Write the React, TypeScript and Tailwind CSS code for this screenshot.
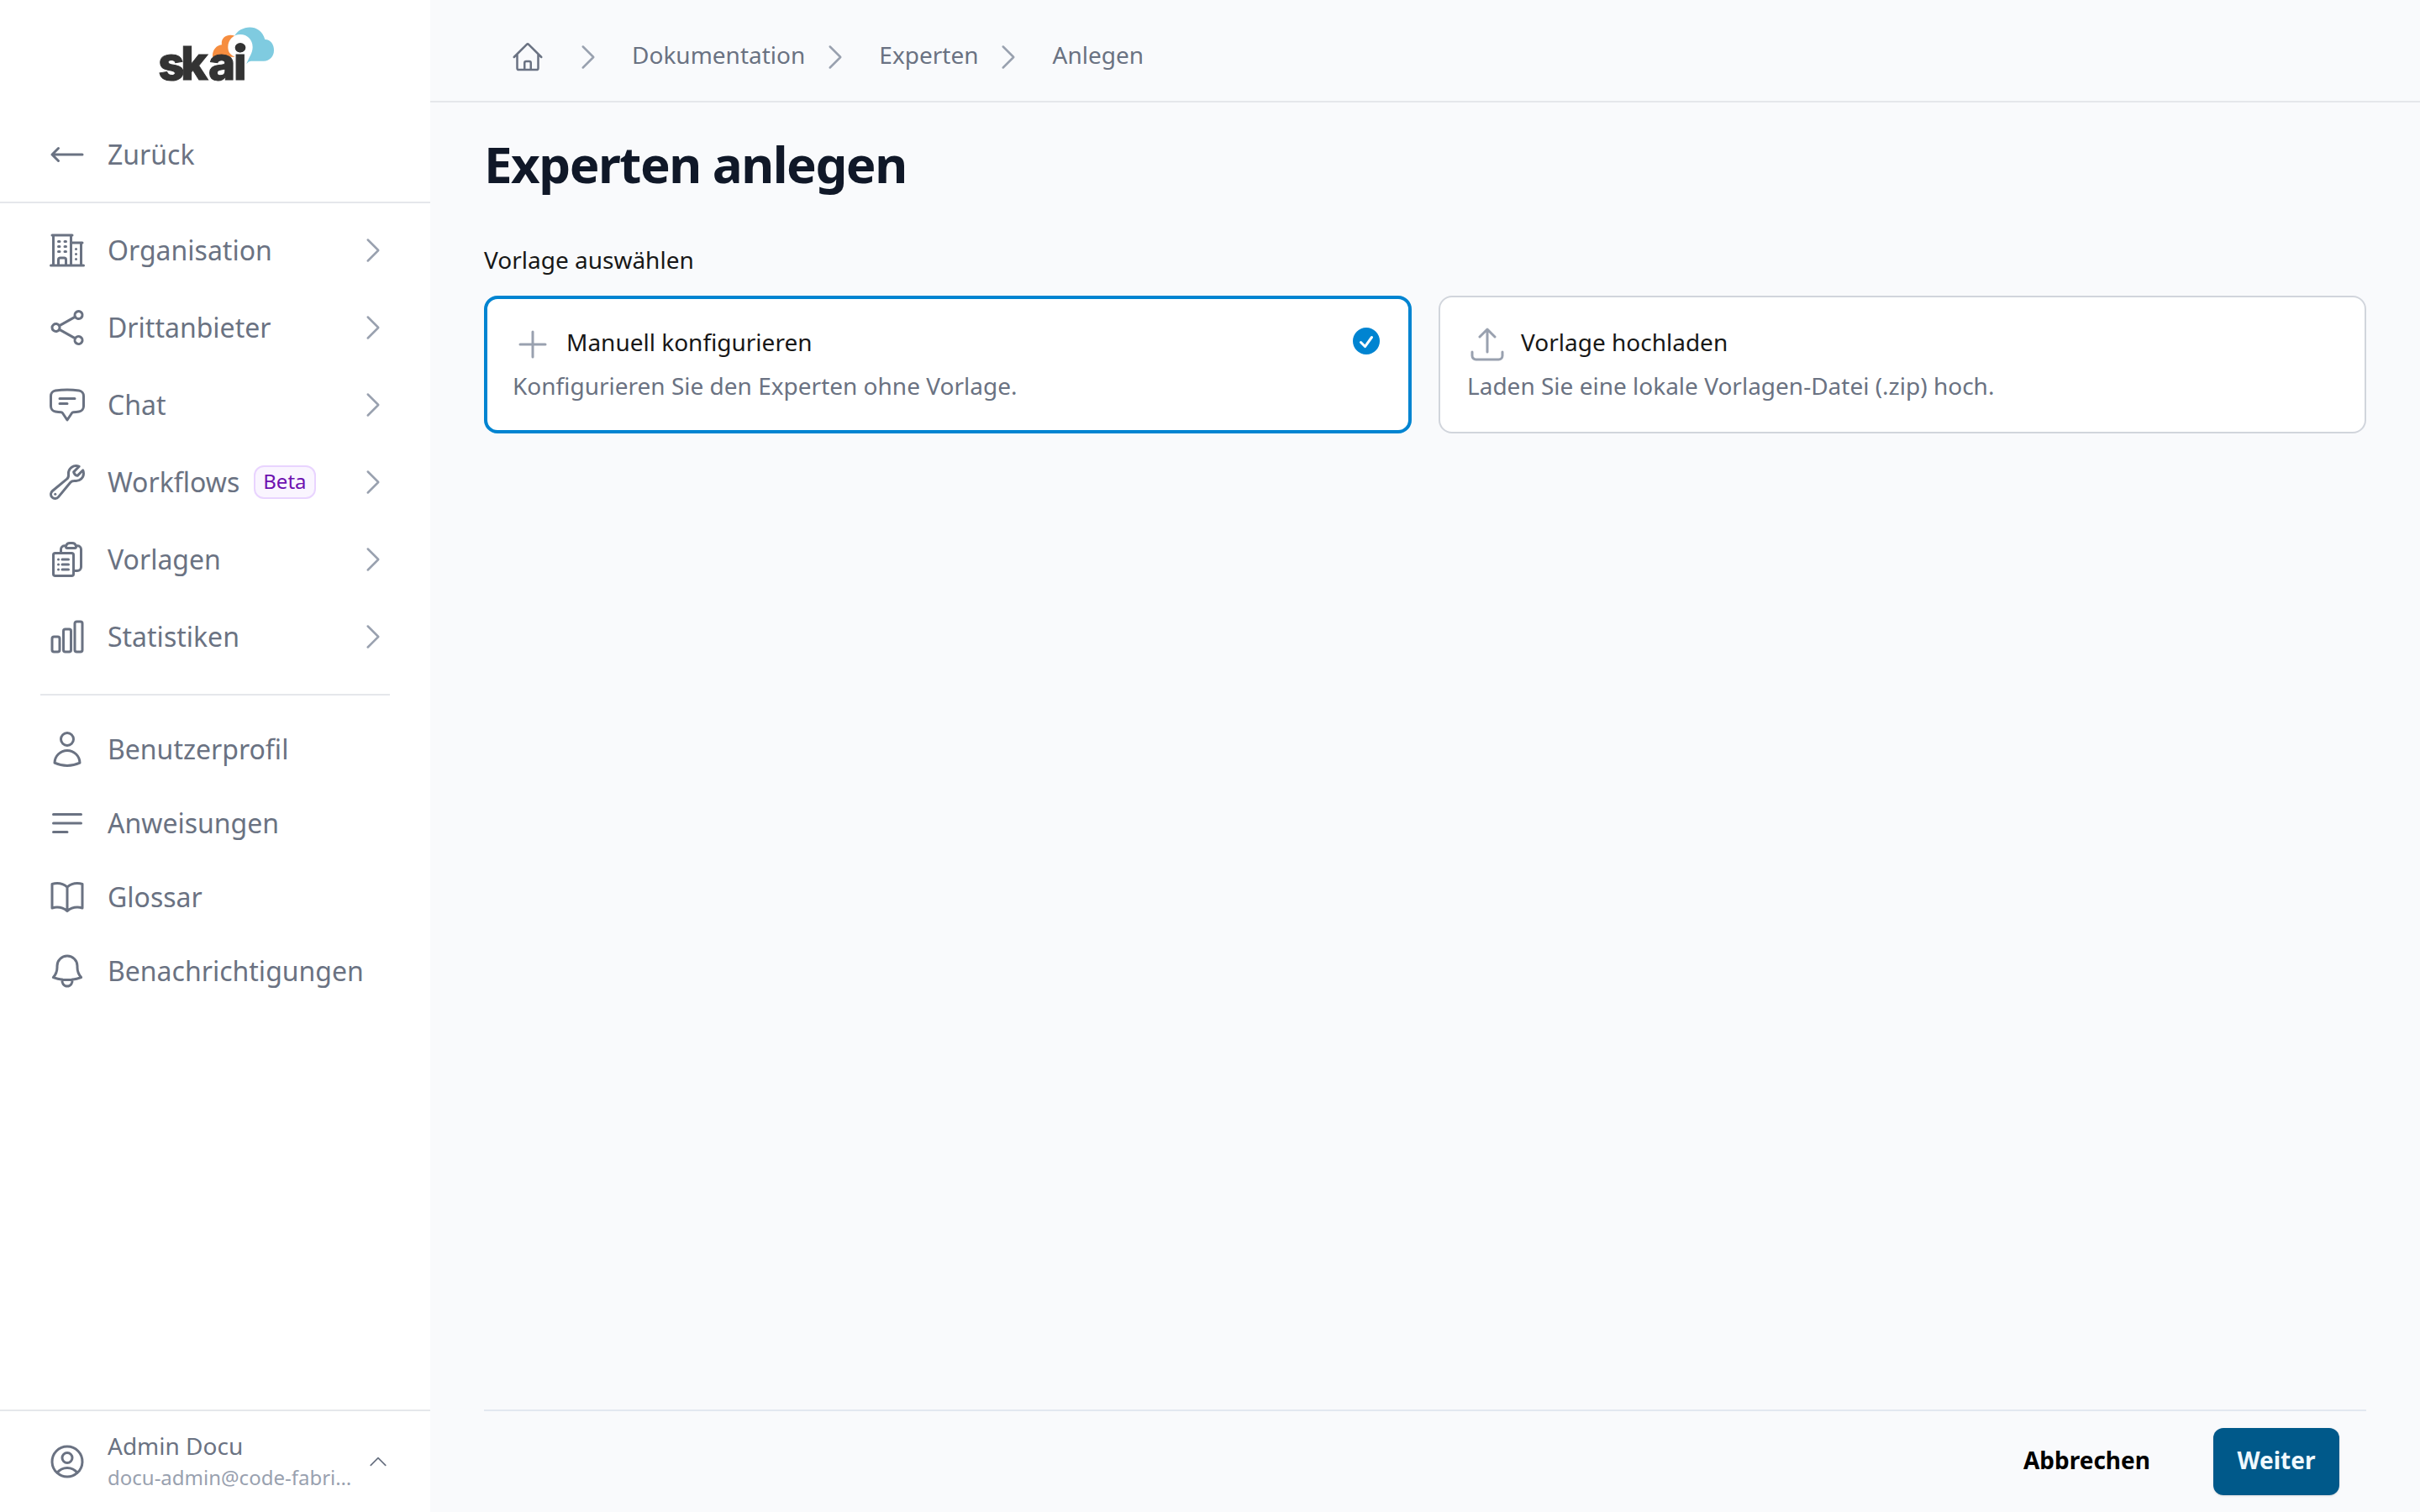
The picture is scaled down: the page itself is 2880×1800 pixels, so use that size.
import type { IconType } from 'react-icons';
import {
  HiMiniCheckCircle,
  HiOutlineArrowLongLeft,
  HiOutlineArrowUpTray,
  HiOutlineBars3BottomLeft,
  HiOutlineBell,
  HiOutlineBookOpen,
  HiOutlineBuildingOffice2,
  HiOutlineChartBar,
  HiOutlineChatBubbleBottomCenterText,
  HiOutlineChevronRight,
  HiOutlineChevronUp,
  HiOutlineClipboardDocumentList,
  HiOutlineHome,
  HiOutlinePlus,
  HiOutlineShare,
  HiOutlineUser,
  HiOutlineUserCircle,
  HiOutlineWrench,
} from 'react-icons/hi2';

type NavItem = { label: string; icon: IconType; badge?: string };

const sections: NavItem[] = [
  { label: 'Organisation', icon: HiOutlineBuildingOffice2 },
  { label: 'Drittanbieter', icon: HiOutlineShare },
  { label: 'Chat', icon: HiOutlineChatBubbleBottomCenterText },
  { label: 'Workflows', icon: HiOutlineWrench, badge: 'Beta' },
  { label: 'Vorlagen', icon: HiOutlineClipboardDocumentList },
  { label: 'Statistiken', icon: HiOutlineChartBar },
];

const personal: NavItem[] = [
  { label: 'Benutzerprofil', icon: HiOutlineUser },
  { label: 'Anweisungen', icon: HiOutlineBars3BottomLeft },
  { label: 'Glossar', icon: HiOutlineBookOpen },
  { label: 'Benachrichtigungen', icon: HiOutlineBell },
];

const crumbs = ['Dokumentation', 'Experten', 'Anlegen'];

function Logo() {
  return (
    <svg
      viewBox="72 51 432 252"
      className="h-[84px] w-36 overflow-visible"
      role="img"
      aria-label="skai"
    >
      <path d="M279 173C277 150 292 132 312 130C307 104 333 88 360 99L372 173Z" fill="#f68d3f" />
      <path
        d="M357 99C376 60 450 50 466 111C484 110 499 128 498 150C498 172 482 188 462 188H416Q408 188 400 198L380 150Z"
        fill="#7fcbe0"
      />
      <path
        d="M378 93C403 93 422 112 422 138C422 160 410 172 400 198H357V172C340 165 334 153 334 138C334 112 353 93 378 93Z"
        fill="#fff"
      />
      <text
        x="85 166 264 354"
        y="256"
        fontSize="164"
        fontWeight="800"
        fill="#333"
        stroke="#333"
        strokeWidth="3"
        className="font-['Inter',sans-serif]"
      >
        skai
      </text>
      {/* head of the pin, sits on the dot of the i */}
      <ellipse cx="378" cy="140" rx="19" ry="17" fill="#333" />
    </svg>
  );
}

function NavRow({ item, expandable = false }: { item: NavItem; expandable?: boolean }) {
  const Icon = item.icon;
  return (
    <a className="flex h-[88px] items-center pr-4 pl-2">
      <Icon className="size-12 shrink-0" />
      <span className="ml-6">{item.label}</span>
      {item.badge && (
        <span className="ml-[17px] flex h-10 items-center rounded-xl border-2 border-purple-200 bg-purple-50 px-[9px] pb-0.5 text-2xl leading-8 text-purple-800">
          {item.badge}
        </span>
      )}
      {expandable && <HiOutlineChevronRight className="-mr-4 ml-auto size-10 text-gray-400" />}
    </a>
  );
}

function Sidebar() {
  return (
    <aside className="flex w-[512px] shrink-0 flex-col bg-white text-[32px] leading-[48px] text-gray-500">
      <div className="flex h-32 justify-center pt-[27px]">
        <Logo />
      </div>
      <div className="flex h-[114px] items-start border-b-2 border-gray-200 px-14 pt-8">
        <HiOutlineArrowLongLeft className="size-12" />
        <span className="ml-6">Zurück</span>
      </div>
      <nav className="flex flex-1 flex-col px-12 pt-3">
        <div className="flex flex-col gap-1">
          {sections.map((item) => (
            <NavRow key={item.label} item={item} expandable />
          ))}
        </div>
        <hr className="mt-6 mb-5 border-t-2 border-gray-200" />
        <div className="flex flex-col">
          {personal.map((item) => (
            <NavRow key={item.label} item={item} />
          ))}
        </div>
      </nav>
      <div className="flex h-[122px] items-center border-t-2 border-gray-200 pl-14">
        <HiOutlineUserCircle className="size-12 shrink-0" />
        <div className="ml-6 w-[296px] whitespace-nowrap">
          <p className="text-[28px] leading-[38px]">Admin Docu</p>
          <p className="text-2xl leading-[38px] text-gray-400">docu-admin@code-fabri…</p>
        </div>
        <HiOutlineChevronUp className="ml-3 size-7" />
      </div>
    </aside>
  );
}

function Breadcrumbs() {
  return (
    <header className="flex h-[122px] items-center border-b-2 border-gray-200 pt-4 pl-24 text-[28px] leading-10 text-gray-500">
      <HiOutlineHome className="size-10" />
      {crumbs.map((crumb, i) => (
        <div key={crumb} className="flex items-center">
          <HiOutlineChevronRight
            className={i === 0 ? 'ml-8 size-10 text-gray-400' : 'ml-4 size-10 text-gray-400'}
          />
          <span className="-mt-1.5 ml-8">{crumb}</span>
        </div>
      ))}
    </header>
  );
}

type TemplateCardProps = {
  title: string;
  text: string;
  icon: IconType;
  selected?: boolean;
};

function TemplateCard({ title, text, icon: Icon, selected = false }: TemplateCardProps) {
  return (
    <label
      className={
        selected
          ? 'flex h-[164px] rounded-2xl border-4 border-sky-600 bg-white px-[30px] pt-[30px]'
          : 'flex h-[164px] rounded-2xl border-2 border-gray-300 bg-white px-8 pt-8'
      }
    >
      <div className="flex-1">
        <div className="flex h-12 items-start">
          <Icon className="size-12 text-gray-400" />
          <span className="mt-px ml-4 text-[28px] leading-10 text-neutral-900">{title}</span>
        </div>
        <p className="mt-[5px] text-[28px] leading-10 text-gray-500">{text}</p>
      </div>
      {selected && <HiMiniCheckCircle className="size-10 text-sky-600" />}
    </label>
  );
}

export default function App() {
  return (
    <div className="flex h-[1800px] w-[2880px] overflow-hidden bg-[#f9fafc] font-['Noto_Sans',sans-serif]">
      <Sidebar />
      <div className="flex flex-1 flex-col">
        <Breadcrumbs />
        <main className="flex flex-1 flex-col px-16 pt-[37px]">
          <h1 className="text-[60px] leading-[72px] font-bold tracking-tight text-gray-900">
            Experten anlegen
          </h1>
          <p className="mt-[58px] text-[28px] leading-10 text-neutral-900">Vorlage auswählen</p>
          <div className="mt-[23px] grid grid-cols-2 gap-8">
            <TemplateCard
              title="Manuell konfigurieren"
              text="Konfigurieren Sie den Experten ohne Vorlage."
              icon={HiOutlinePlus}
              selected
            />
            <TemplateCard
              title="Vorlage hochladen"
              text="Laden Sie eine lokale Vorlagen-Datei (.zip) hoch."
              icon={HiOutlineArrowUpTray}
            />
          </div>
          <footer className="mt-auto flex h-[122px] items-start justify-end border-t-2 border-slate-200 pt-5 pr-8 text-[28px] leading-10 font-bold">
            <button className="mr-[75px] h-20 pb-1 text-black">Abbrechen</button>
            <button className="h-20 w-[150px] rounded-xl bg-sky-800 pb-1 text-sky-50 shadow-sm">
              Weiter
            </button>
          </footer>
        </main>
      </div>
    </div>
  );
}
